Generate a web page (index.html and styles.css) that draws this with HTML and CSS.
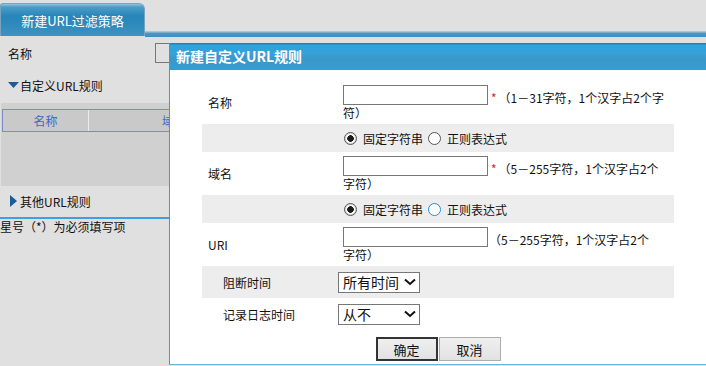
FILE: index.html
```html
<!DOCTYPE html>
<html lang="zh-CN">
<head>
    <meta charset="utf-8">
    <title>新建URL过滤策略</title>
    <link rel="stylesheet" href="styles.css">
</head>
<body>
    <div class="tabbar">
        <div class="tab">新建URL过滤策略</div>
        <div class="tab-line"></div>
    </div>

    <div class="page">
        <div class="name-row">
            <span class="name-label">名称</span>
            <input class="name-input" type="text">
        </div>

        <div class="group-title">
            <svg class="arrow-down" width="11" height="6" viewBox="0 0 11 6"><path d="M0 0H11L5.5 6Z" fill="#1a5d96"/></svg>
            自定义URL规则
        </div>

        <div class="rule-table">
            <div class="rule-head">
                <span class="col col-name">名称</span>
                <span class="col col-domain">域名</span>
            </div>
        </div>

        <div class="group-title group-other">
            <svg class="arrow-right" width="7" height="12" viewBox="0 0 7 12"><path d="M0 0L7 6L0 12Z" fill="#1a5d96"/></svg>
            其他URL规则
        </div>

        <div class="note">星号（*）为必须填写项</div>
    </div>

    <!-- 弹出对话框 -->
    <div class="dialog">
        <div class="dialog-title">新建自定义URL规则</div>

        <div class="form">
            <div class="frow">
                <div class="f-label">名称</div>
                <div class="f-value">
                    <input class="txt" type="text"><span class="req">*</span>（1－31字符，1个汉字占2个字符）
                </div>
            </div>
            <div class="frow gray radio-row">
                <div class="f-label"></div>
                <div class="f-value">
                    <label><input type="radio" name="t1" checked>固定字符串</label>
                    <label><input type="radio" name="t1">正则表达式</label>
                </div>
            </div>
            <div class="frow">
                <div class="f-label">域名</div>
                <div class="f-value">
                    <input class="txt" type="text"><span class="req">*</span>（5－255字符，1个汉字占2个<span class="nowrap">字符）</span>
                </div>
            </div>
            <div class="frow gray radio-row">
                <div class="f-label"></div>
                <div class="f-value">
                    <label><input type="radio" name="t2" checked>固定字符串</label>
                    <label><input class="hover" type="radio" name="t2">正则表达式</label>
                </div>
            </div>
            <div class="frow">
                <div class="f-label">URI</div>
                <div class="f-value">
                    <input class="txt" type="text"><span class="hint">（5－255字符，1个汉字占2个<span class="nowrap">字符）</span></span>
                </div>
            </div>
            <div class="frow gray sel-row">
                <div class="f-label">阻断时间</div>
                <div class="f-value">
                    <div class="select">
                        <span>所有时间</span>
                        <svg width="12" height="8" viewBox="0 0 12 8"><path d="M1 1.5L6 6L11 1.5" fill="none" stroke="#111" stroke-width="2"/></svg>
                    </div>
                </div>
            </div>
            <div class="frow sel-row">
                <div class="f-label">记录日志时间</div>
                <div class="f-value">
                    <div class="select">
                        <span>从不</span>
                        <svg width="12" height="8" viewBox="0 0 12 8"><path d="M1 1.5L6 6L11 1.5" fill="none" stroke="#111" stroke-width="2"/></svg>
                    </div>
                </div>
            </div>
        </div>

        <div class="buttons">
            <button class="btn btn-ok">确定</button><button class="btn">取消</button>
        </div>
    </div>
</body>
</html>
```

FILE: styles.css
```css
html, body {
    margin: 0;
    height: 100%;
    overflow: hidden;
}

body {
    font-family: "Noto Sans CJK SC", "Noto Sans", sans-serif;
    font-size: 12px;
    line-height: 15px;
    color: #111;
    background-color: #e0e0e0;
    position: relative;
}

/* 顶部标签 */
.tabbar {
    display: flex;
    height: 37px;
}

.tab {
    width: 143px;
    height: 32px;
    margin-top: 3px;
    border: 1px solid #78a4c0;
    border-bottom: none;
    border-radius: 3px 6px 0 0;
    background: linear-gradient(#93c3dc 0, #4c9cc8 3px, #2886b8 12px, #2a88ba 55%, #3f93c2 100%);
    color: #fff;
    font-size: 13px;
    line-height: 34px;
    text-align: center;
}

.tab-line {
    flex: 1;
    align-self: flex-end;
    height: 6px;
    background: linear-gradient(#a9c5d6 0, #a9c5d6 1px, #4f97c2 2px, #3f8ec0 100%);
}

/* 背后的页面 */
.page {
    padding-top: 6px;
}

.name-row {
    display: flex;
    align-items: center;
    height: 20px;
}

.name-label {
    width: 147px;
    padding-left: 8px;
}

.name-input {
    width: 200px;
    height: 20px;
    box-sizing: border-box;
    border: 1px solid #777;
    background: transparent;
    margin: 0;
}

.group-title {
    display: flex;
    align-items: center;
    height: 24px;
    margin-top: 10px;
    padding-left: 8px;
    gap: 1px;
}

.group-other {
    height: 30px;
    margin-top: 0;
    padding-left: 10px;
    gap: 3px;
}

.rule-table {
    height: 77px;
    margin: 6px 0 0 1px;
    padding: 6px 0 0 1px;
    background-color: #d0d0d0;
}

.rule-head {
    display: flex;
    height: 21px;
    border: 1px solid #7e8cc0;
    background-color: #c9c9c9;
    color: #3a68cc;
    line-height: 21px;
}

.col {
    text-align: center;
}

.col-name {
    width: 85px;
    border-right: 1px solid #ececec;
}

.col-domain {
    width: 170px;
}

.note {
    margin-top: 1px;
    border-top: 2px solid #3fa0dc;
    padding-top: 1px;
    line-height: 14px;
}

/* 对话框 */
.dialog {
    position: absolute;
    left: 169px;
    top: 43px;
    width: 560px;
    height: 321px;
    background-color: #fff;
    border-left: 1px solid #3d9bd5;
    border-bottom: 1px solid #6cb3de;
}

.dialog-title {
    height: 27px;
    padding-left: 6px;
    background: linear-gradient(#1c82c2 0, #1c82c2 1px, #30a2dc 2px, #36a2d8 40%, #3b97c9 55%, #3a98ca 70%, #2ea0dc 100%);
    color: #fff;
    font-size: 14px;
    font-weight: bold;
    line-height: 27px;
}

.form {
    width: 472px;
    margin: 11px 0 0 32px;
}

.frow {
    display: grid;
    grid-template-columns: 136px 1fr;
}

.gray {
    background-color: #ededed;
}

.f-label {
    display: flex;
    align-items: center;
    padding-left: 6px;
}

.f-value {
    padding: 4px 3px 4px 5px;
}

.txt {
    width: 145px;
    height: 20px;
    box-sizing: border-box;
    margin: 0;
    border: 1px solid #777;
    vertical-align: bottom;
}

.req {
    color: #e02424;
    margin: 0 2px 0 3px;
}

.hint {
    margin-left: 1px;
}

.nowrap {
    white-space: nowrap;
}

.radio-row .f-value {
    display: flex;
    align-items: center;
    height: 28px;
    padding: 0 0 0 6px;
    box-sizing: border-box;
    gap: 5px;
}

.radio-row label {
    display: flex;
    align-items: center;
    gap: 6px;
}

input[type="radio"] {
    appearance: none;
    width: 13px;
    height: 13px;
    margin: 0;
    border: 1px solid #555;
    border-radius: 50%;
    background-color: #fff;
}

input[type="radio"]:checked {
    background: radial-gradient(circle, #1a1a1a 0, #1a1a1a 3px, #fff 3.6px);
    box-shadow: inset 0 0 0 1px #d8d8d8;
}

input[type="radio"].hover {
    border-color: #1e8fe0;
}

.sel-row {
    height: 32px;
}

.sel-row .f-label {
    padding-left: 21px;
}

.sel-row .f-value {
    display: flex;
    align-items: center;
    padding: 0;
}

.select {
    display: flex;
    align-items: center;
    justify-content: space-between;
    width: 82px;
    height: 21px;
    box-sizing: border-box;
    padding: 0 3px 0 4px;
    border: 1px solid #777;
    background-color: #fff;
    font-size: 14px;
}

.buttons {
    width: 472px;
    margin: 7px 0 0 32px;
    display: flex;
    justify-content: center;
    gap: 1px;
}

.btn {
    width: 62px;
    height: 24px;
    margin: 0;
    padding: 0;
    border: 1px solid #adadad;
    background: linear-gradient(#efefef, #e2e2e2);
    font-family: "Noto Sans CJK SC", sans-serif;
    font-size: 13px;
    color: #111;
}

.btn-ok {
    border: 2px solid #333;
}
```
